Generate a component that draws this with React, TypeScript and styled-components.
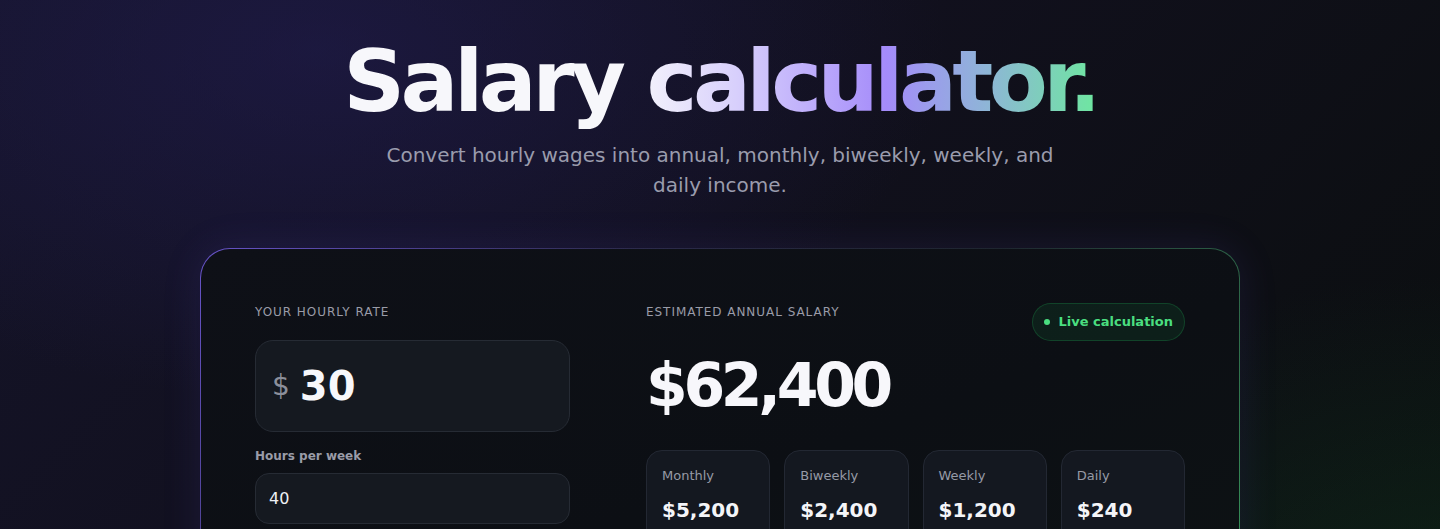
import React from 'react';
import styled, { createGlobalStyle } from 'styled-components';

const GlobalStyle = createGlobalStyle`
  html, body {
    margin: 0;
    padding: 0;
    background: #0c0d14;
  }
  * {
    box-sizing: border-box;
  }
`;

const Page = styled.div`
  min-height: 100vh;
  font-family: 'DejaVu Sans', 'Noto Sans', sans-serif;
  color: #f5f5fa;
  background:
    radial-gradient(ellipse 900px 500px at 22% 8%, rgba(36, 30, 88, 0.5), transparent 70%),
    radial-gradient(ellipse 700px 500px at 100% 100%, rgba(20, 70, 40, 0.35), transparent 70%),
    linear-gradient(135deg, #15142a 0%, #11101d 45%, #0a0e0d 100%);
  padding: 34px 0 40px;
  display: flex;
  flex-direction: column;
  align-items: center;
`;

const Title = styled.h1`
  margin: 0;
  font-size: 86px;
  line-height: 1.1;
  font-weight: 700;
  letter-spacing: -0.054em;
  background: linear-gradient(90deg, #f7f7fb 0%, #f7f7fb 38%, #d8d0fc 52%, #a48bfa 72%, #8fb4d8 85%, #6ee7a0 100%);
  -webkit-background-clip: text;
  background-clip: text;
  color: transparent;
`;

const Subtitle = styled.p`
  margin: 11px 0 0;
  max-width: 680px;
  text-align: center;
  font-size: 20px;
  line-height: 30px;
  color: #9a9cad;
`;

const Card = styled.section`
  margin-top: 48px;
  width: 1040px;
  border-radius: 30px;
  border: 1px solid transparent;
  background:
    linear-gradient(160deg, #0e1017 0%, #0c0f14 60%, #0d1214 100%) padding-box,
    linear-gradient(120deg, rgba(124, 100, 240, 0.8) 0%, rgba(90, 90, 150, 0.35) 35%, rgba(60, 80, 90, 0.35) 65%, rgba(74, 200, 120, 0.7) 100%) border-box;
  box-shadow: 0 0 40px rgba(110, 80, 230, 0.12);
  padding: 54px 54px 40px;
  display: grid;
  grid-template-columns: 315px 1fr;
  column-gap: 76px;
`;

const Column = styled.div`
  display: flex;
  flex-direction: column;
`;

const Eyebrow = styled.div`
  font-size: 12px;
  line-height: 18px;
  letter-spacing: 0.08em;
  text-transform: uppercase;
  color: #9a9ca8;
`;

const RateBox = styled.div`
  margin-top: 19px;
  height: 92px;
  border-radius: 18px;
  background: #151920;
  border: 1px solid #262b34;
  display: flex;
  align-items: center;
  padding: 0 16px;
  gap: 10px;
`;

const Currency = styled.span`
  font-size: 28px;
  color: #8b8f9b;
`;

const RateValue = styled.span`
  font-size: 40px;
  font-weight: 700;
  color: #f7f7fb;
`;

const FieldLabel = styled.div`
  margin-top: 17px;
  font-size: 12px;
  font-weight: 700;
  color: #9a9ca8;
`;

const SmallInput = styled.div`
  margin-top: 10px;
  height: 51px;
  border-radius: 14px;
  background: #151920;
  border: 1px solid #262b34;
  display: flex;
  align-items: center;
  padding: 0 13px;
  font-size: 16px;
  color: #eef0f4;
`;

const ResultHead = styled.div`
  display: flex;
  justify-content: space-between;
  align-items: flex-start;
`;

const Badge = styled.div`
  height: 38px;
  padding: 0 11px;
  border-radius: 999px;
  display: flex;
  align-items: center;
  gap: 8px;
  font-size: 13px;
  font-weight: 700;
  color: #4ade80;
  background: rgba(34, 197, 94, 0.09);
  border: 1px solid rgba(34, 197, 94, 0.22);
`;

const Dot = styled.span`
  width: 6px;
  height: 6px;
  border-radius: 50%;
  background: #4ade80;
`;

const Annual = styled.div`
  margin-top: 8px;
  font-size: 60px;
  line-height: 72px;
  font-weight: 700;
  letter-spacing: -0.072em;
  color: #f7f7fb;
`;

const Breakdown = styled.div`
  margin-top: 29px;
  display: grid;
  grid-template-columns: repeat(4, 1fr);
  gap: 14px;
`;

const Tile = styled.div`
  border-radius: 16px;
  background: #141820;
  border: 1px solid #232833;
  padding: 17px 15px 22px;
`;

const TileLabel = styled.div`
  font-size: 13px;
  color: #969aa6;
`;

const TileValue = styled.div`
  margin-top: 15px;
  font-size: 20px;
  font-weight: 700;
  color: #f4f5f8;
`;

const periods = [
  { label: 'Monthly', value: '$5,200' },
  { label: 'Biweekly', value: '$2,400' },
  { label: 'Weekly', value: '$1,200' },
  { label: 'Daily', value: '$240' },
];

const App: React.FC = () => (
  <>
    <GlobalStyle />
    <Page>
      <Title>Salary calculator.</Title>
      <Subtitle>Convert hourly wages into annual, monthly, biweekly, weekly, and daily income.</Subtitle>
      <Card>
        <Column>
          <Eyebrow>Your hourly rate</Eyebrow>
          <RateBox>
            <Currency>$</Currency>
            <RateValue>30</RateValue>
          </RateBox>
          <FieldLabel>Hours per week</FieldLabel>
          <SmallInput>40</SmallInput>
        </Column>
        <Column>
          <ResultHead>
            <Eyebrow>Estimated annual salary</Eyebrow>
            <Badge>
              <Dot />
              Live calculation
            </Badge>
          </ResultHead>
          <Annual>$62,400</Annual>
          <Breakdown>
            {periods.map((p) => (
              <Tile key={p.label}>
                <TileLabel>{p.label}</TileLabel>
                <TileValue>{p.value}</TileValue>
              </Tile>
            ))}
          </Breakdown>
        </Column>
      </Card>
    </Page>
  </>
);

export default App;
